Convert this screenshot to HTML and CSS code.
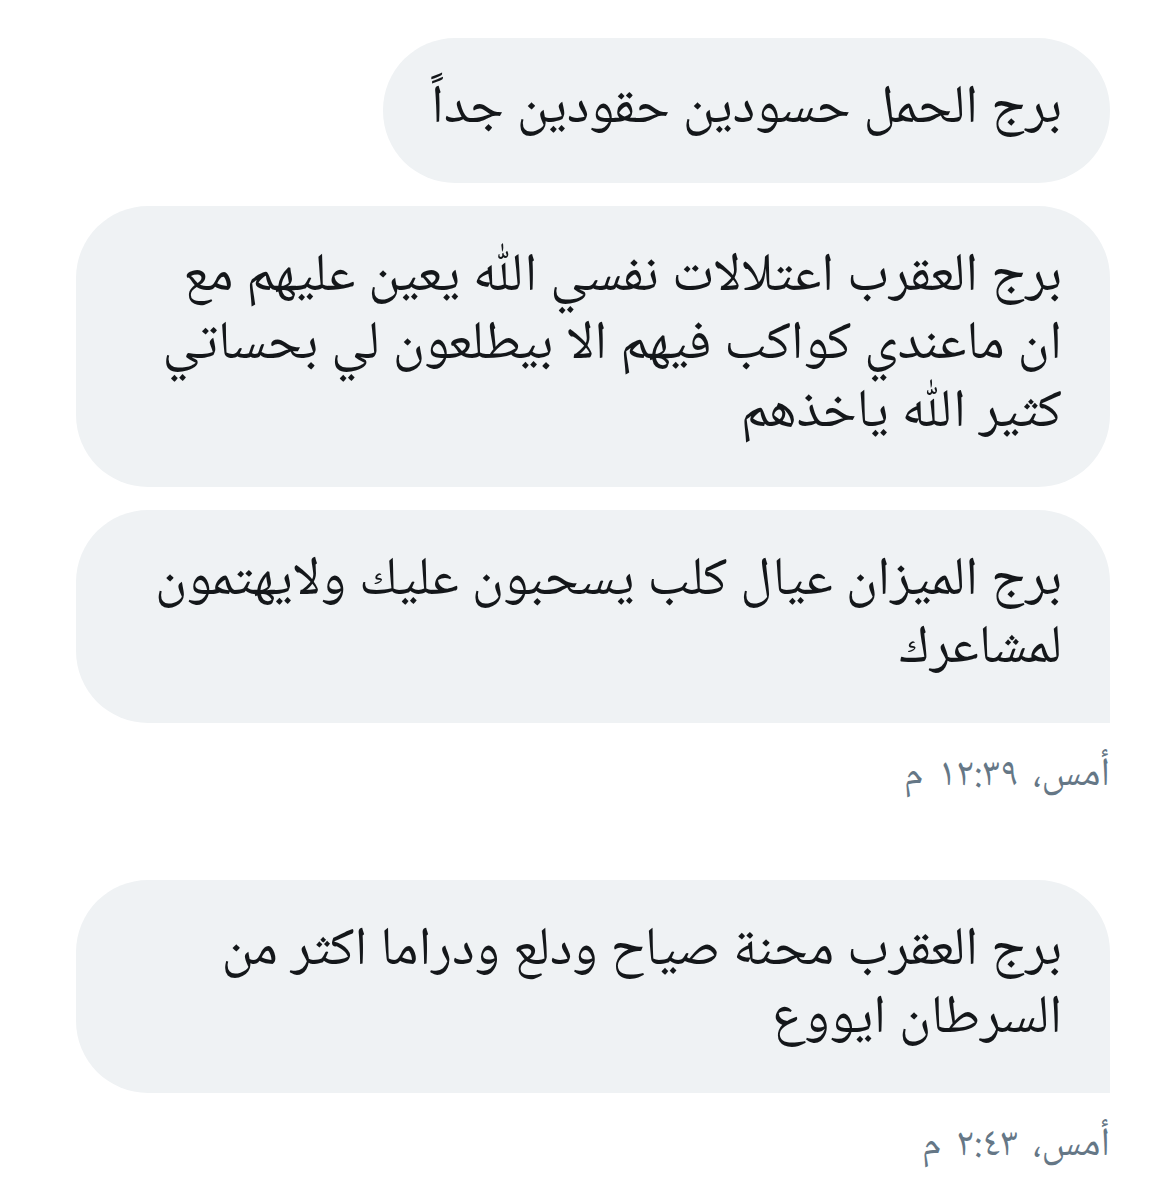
FILE: index.html
```html
<!DOCTYPE html>
<html lang="ar" dir="rtl">
<head>
<meta charset="utf-8">
<title>رسائل</title>
<link rel="stylesheet" href="styles.css">
</head>
<body>
<main class="thread">
  <div class="group">
    <div class="bubble">برج الحمل حسودين حقودين جداً</div>
    <div class="bubble">برج العقرب اعتلالات نفسي اللّٰه يعين عليهم مع<br>ان ماعندي كواكب فيهم الا بيطلعون لي بحساتي كثير اللّٰه ياخذهم</div>
    <div class="bubble last">برج الميزان عيال كلب يسحبون عليك ولايهتمون لمشاعرك</div>
    <div class="time">أمس، ١٢:٣٩ م</div>
  </div>
  <div class="group">
    <div class="bubble last">برج العقرب محنة صياح ودلع ودراما اكثر من السرطان ايووع</div>
    <div class="time">أمس، ٢:٤٣ م</div>
  </div>
</main>
</body>
</html>
```
FILE: styles.css
```css
html, body {
  margin: 0;
  padding: 0;
  background: #ffffff;
}
body {
  font-family: "Noto Naskh Arabic", "Noto Sans Arabic", "DejaVu Sans", sans-serif;
  color: #14171a;
}
.thread {
  display: flex;
  flex-direction: column;
  padding: 38px 57px 0 0;
}
.group {
  display: flex;
  flex-direction: column;
  align-items: flex-start;
  gap: 23px;
  margin-bottom: 79px;
}
.bubble {
  box-sizing: border-box;
  background: #eff2f4;
  border-radius: 72px;
  padding: 38px 48px 39px 48px;
  max-width: 1034px;
  font-size: 54px;
  line-height: 68px;
  word-spacing: 1px;
}
.bubble.last {
  border-bottom-right-radius: 0;
}
.time {
  font-size: 40px;
  line-height: 50px;
  word-spacing: 6px;
  color: #657786;
  margin-top: 5px;
}
```
